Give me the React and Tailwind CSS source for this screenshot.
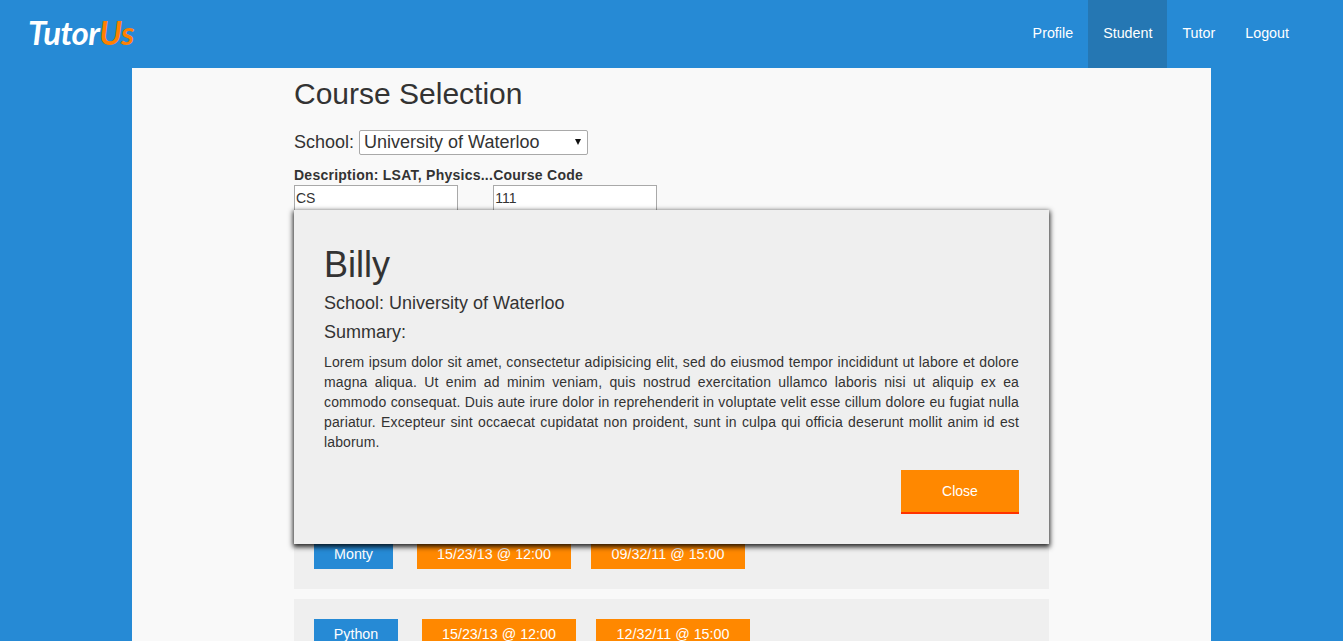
import React from "react";

const sans = "font-['Liberation_Sans',Arial,sans-serif]";
const nav = ["Profile", "Student", "Tutor", "Logout"];
const cards = [
  { name: "Monty", width: "w-[79px]", dates: ["15/23/13 @ 12:00", "09/32/11 @ 15:00"] },
  { name: "Python", width: "w-[84px]", dates: ["15/23/13 @ 12:00", "12/32/11 @ 15:00"] },
];

function Chip({ children, color }) {
  return (
    <span className={`flex h-[30px] items-center justify-center pt-[1px] text-[14.3px] whitespace-nowrap text-white ${color}`}>
      {children}
    </span>
  );
}

function Card({ name, width, dates }) {
  return (
    <div className="flex h-[70px] items-center gap-5 bg-[#efefef] pl-5">
      <span className="mr-1"><Chip color={`bg-[#268ad5] ${width}`}>{name}</Chip></span>
      {dates.map((d, i) => (
        <Chip key={i} color="w-[154px] bg-[#ff8800]">{d}</Chip>
      ))}
    </div>
  );
}

export default function App() {
  return (
    <div className={`flex h-screen flex-col overflow-hidden bg-[#268ad5] text-[#333] ${sans}`}>
      <header className="flex h-[68px] shrink-0 items-stretch justify-between pl-[28px] pr-[39px]">
        <div className="flex items-center pb-1 font-['Lato',sans-serif] text-[33px] leading-none font-bold italic tracking-[-0.6px] text-white">
          Tutor<span className="text-[#ff8000]">Us</span>
        </div>
        <nav className="flex">
          {nav.map((n) => (
            <a key={n} className={`flex items-center px-[15px] text-[14.3px] text-white ${n === "Student" ? "bg-[#2577b3]" : ""}`}>
              {n}
            </a>
          ))}
        </nav>
      </header>

      <main className="relative mx-auto w-[1079px] flex-1 bg-[#f9f9f9] px-[162px]">
        <h1 className="mt-[8px] text-[30px] leading-[36px] font-normal">Course Selection</h1>

        <div className="mt-[17px] flex items-center gap-[5px] text-[18px]">
          <label>School:</label>
          <div className="relative">
            <select
              defaultValue="University of Waterloo"
              className="block h-[25px] w-[229px] appearance-none rounded-[2px] border border-[#a9a9a9] bg-white pb-[2px] pl-1 text-[18px] leading-[20px] text-[#333]"
            >
              <option>University of Waterloo</option>
            </select>
            <svg viewBox="0 0 6 6" className="pointer-events-none absolute top-[9px] right-[7px] h-[6px] w-[6px]">
              <path d="M0 0h6L3 6z" fill="#111" />
            </svg>
          </div>
        </div>

        <div className="mt-[10px] flex">
          <div className="flex flex-col">
            <label className="text-[14px] leading-[18px] font-bold tracking-[0.25px] whitespace-nowrap">Description: LSAT, Physics...</label>
            <input defaultValue="CS" className="mt-[1px] h-[26px] w-[164px] border border-[#a9a9a9] bg-white px-[1px] text-[14px]" />
          </div>
          <div className="flex flex-col">
            <label className="text-[14px] leading-[18px] font-bold tracking-[0.25px] whitespace-nowrap">Course Code</label>
            <input defaultValue="111" className="mt-[1px] h-[26px] w-[164px] border border-[#a9a9a9] bg-white px-[1px] text-[14px]" />
          </div>
        </div>

        <div className="mt-[308px] flex flex-col gap-[10px]">
          {cards.map((c) => (
            <Card key={c.name} {...c} />
          ))}
        </div>

        <section className="absolute top-[142px] left-[162px] flex h-[334px] w-[755px] flex-col bg-[#efefef] p-[30px] shadow-[0_2px_5px_1px_rgba(0,0,0,0.85)]">
          <h2 className="text-[36px] leading-[50px] font-normal">Billy</h2>
          <p className="text-[18px] leading-[26px]">School: University of Waterloo</p>
          <p className="mt-[3px] text-[18px] leading-[26px]">Summary:</p>
          <p className="mt-[7px] text-justify text-[14px] leading-[20px] tracking-[0.14px]">
            Lorem ipsum dolor sit amet, consectetur adipisicing elit, sed do eiusmod tempor incididunt ut labore et dolore magna aliqua. Ut enim ad minim veniam, quis nostrud exercitation ullamco laboris nisi ut aliquip ex ea commodo consequat. Duis aute irure dolor in reprehenderit in voluptate velit esse cillum dolore eu fugiat nulla pariatur. Excepteur sint occaecat cupidatat non proident, sunt in culpa qui officia deserunt mollit anim id est laborum.
          </p>
          <div className="mt-auto flex justify-end">
            <button className="h-[44px] w-[118px] border-b-2 border-[#ff3300] bg-[#ff8800] text-[14px] text-white">Close</button>
          </div>
        </section>
      </main>
    </div>
  );
}
